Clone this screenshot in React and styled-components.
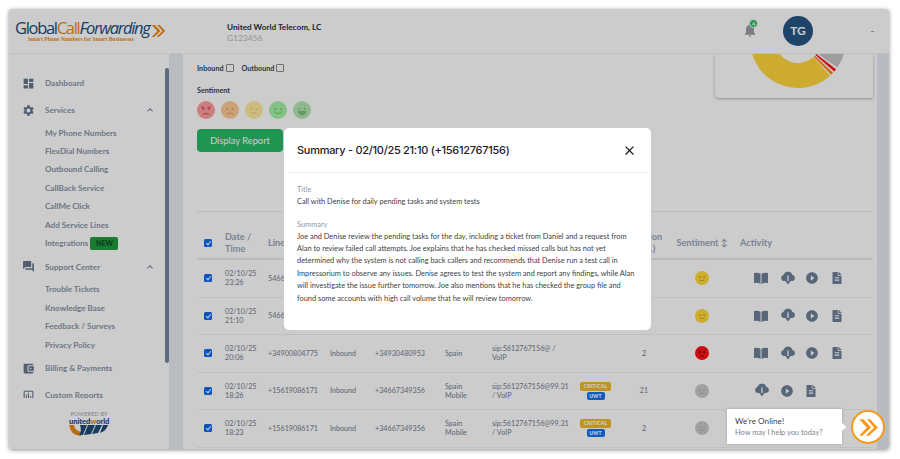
import React from "react";
import styled, { createGlobalStyle } from "styled-components";
import {
  MdDashboard, MdSettings, MdForum, MdAccountBalanceWallet, MdOutlineAssessment,
  MdExpandLess, MdNotifications, MdClose, MdPlayCircleFilled,
} from "react-icons/md";
import { FaFileAlt } from "react-icons/fa";

const Global = createGlobalStyle`
  html, body { margin: 0; padding: 0; background: #fff; }
  body { font-family: "Lato", "Liberation Sans", sans-serif; }
  * { box-sizing: border-box; }
`;

const Page = styled.div`
  width: 900px;
  height: 459px;
  padding: 9px 11px 10px 9px;
  overflow: hidden;
`;
const Frame = styled.div`
  position: relative;
  width: 880px;
  height: 440px;
  background: #fff;
  border-radius: 3px;
  box-shadow: 0 1px 4px rgba(0, 0, 0, 0.45);
  overflow: hidden;
  display: flex;
  flex-direction: column;
`;

/* Header */
const Header = styled.header`
  height: 45px;
  flex: none;
  display: flex;
  align-items: center;
  border-bottom: 1px solid #f0f0f0;
  background: #fff;
  z-index: 2;
`;
const Logo = styled.div`
  width: 218px;
  padding: 0 0 1px 6px;
  display: flex;
  align-items: center;
  gap: 1px;
`;
const LogoText = styled.div`
  display: flex;
  flex-direction: column;
`;
const LogoWords = styled.div`
  font-family: "Open Sans", sans-serif;
  font-size: 16.5px;
  line-height: 17px;
  letter-spacing: -1.3px;
  color: #1f4a78;
  white-space: nowrap;
`;
const LogoOrange = styled.span`
  color: #ea8a16;
`;
const LogoItalic = styled.span`
  font-style: italic;
`;
const Tagline = styled.div`
  font-family: "Liberation Serif", serif;
  font-weight: 700;
  font-size: 5.6px;
  line-height: 6px;
  color: #ea8a16;
  padding-left: 13px;
  white-space: nowrap;
`;
const Company = styled.div`
  flex: 1;
  margin-top: 4px;
`;
const CompanyName = styled.div`
  font-size: 8.2px;
  font-weight: 700;
  line-height: 11px;
  color: #2b3038;
`;
const CompanyId = styled.div`
  font-size: 8.4px;
  line-height: 11px;
  color: #b8bcc2;
`;
const Bell = styled.div`
  position: relative;
  width: 16px;
  height: 16px;
  margin-right: 25px;
  margin-top: -2px;
  color: #9a9da3;
  font-size: 16px;
  line-height: 16px;
`;
const BellBadge = styled.span`
  position: absolute;
  top: -3px;
  left: 7px;
  width: 9px;
  height: 9px;
  border-radius: 50%;
  background: #1fb85c;
  border: 1px solid #fff;
  color: #fff;
  font-size: 6px;
  font-weight: 700;
  line-height: 7px;
  text-align: center;
`;
const Avatar = styled.div`
  width: 30px;
  height: 30px;
  border-radius: 50%;
  background: #265585;
  color: #fff;
  font-size: 12px;
  font-weight: 700;
  display: flex;
  align-items: center;
  justify-content: center;
  margin-right: 58px;
  margin-top: -1px;
`;
const HeaderDash = styled.div`
  width: 3px;
  height: 1px;
  background: #aaa;
  margin-right: 15px;
`;

/* Body */
const Body = styled.div`
  flex: 1;
  min-height: 0;
  display: flex;
`;
const Sidebar = styled.aside`
  position: relative;
  width: 160px;
  flex: none;
  display: flex;
  flex-direction: column;
  background: #fff;
`;
const SideThumb = styled.div`
  position: absolute;
  right: 0;
  top: 14px;
  width: 4px;
  height: 295px;
  border-radius: 2px;
  background: #74869f;
`;
const Nav = styled.nav`
  height: 344px;
  flex: none;
  overflow: hidden;
  padding-top: 11px;
`;
const NavHead = styled.div`
  height: 18px;
  margin-top: 9px;
  display: flex;
  align-items: center;
  color: #8a94a6;
  font-size: 8.1px;
  font-weight: 700;
`;
const NavIcon = styled.span`
  width: 36px;
  padding-left: 13px;
  display: flex;
  align-items: center;
  font-size: 13px;
  color: #66758c;
`;
const NavLabel = styled.span`
  flex: 1;
`;
const NavChevron = styled.span`
  width: 18px;
  margin-right: 7px;
  display: flex;
  font-size: 12px;
  color: #7a8598;
`;
const SubList = styled.div`
  margin: 4.5px 0 -3.5px;
`;
const SubItem = styled.div`
  height: 18.4px;
  padding-left: 36px;
  display: flex;
  align-items: center;
  color: #8a94a6;
  font-size: 8.1px;
  font-weight: 700;
`;
const NewTag = styled.span`
  margin-left: 2px;
  width: 28px;
  text-align: center;
  height: 13px;
  border-radius: 2px;
  background: #1f9a3d;
  color: #0b4a1c;
  font-size: 7px;
  line-height: 13px;
  font-weight: 700;
`;
const Powered = styled.div`
  flex: 1;
  display: flex;
  flex-direction: column;
  align-items: center;
  padding: 12px 0 0 0;
  width: 160px;
`;
const PoweredText = styled.div`
  font-size: 5.6px;
  line-height: 8px;
  color: #9aa0a8;
  letter-spacing: 0.1px;
`;
const UwLogo = styled.div`
  position: relative;
  width: 42px;
  height: 20px;
`;
const UwWord = styled.div`
  position: absolute;
  top: -1px;
  left: 1px;
  font-size: 7.6px;
  font-weight: 900;
  line-height: 9px;
  letter-spacing: -0.1px;
  color: #1f4a78;
  white-space: nowrap;
`;
const UwO = styled.span`
  color: #ea8a16;
`;
const Track = styled.div`
  width: 14px;
  flex: none;
  background: #e6ebf2;
`;
const RightTrack = styled(Track)`
  width: 12px;
`;

/* Main */
const Main = styled.main`
  flex: 1;
  min-width: 0;
  overflow: hidden;
  padding: 0 4px 0 14px;
  background: #fff;
`;
const TopRow = styled.div`
  display: flex;
  justify-content: space-between;
  align-items: flex-start;
  height: 158px;
  border-bottom: 1px solid #ededed;
`;
const Filters = styled.div`
  padding-top: 8px;
`;
const DirectionRow = styled.div`
  display: flex;
  align-items: center;
  gap: 8px;
  height: 12px;
`;
const CheckLabel = styled.label`
  display: flex;
  align-items: center;
  gap: 2px;
  color: #3c4350;
  font-size: 7.2px;
  font-weight: 700;
`;
const Check = styled.input`
  margin: 0;
  appearance: none;
  position: relative;
  width: 8px;
  height: 8px;
  border: 1px solid #8b8b8b;
  border-radius: 1px;
  background: #fff;
  &:checked {
    background: #0e6bf0;
    border: 0;
    border-radius: 1.5px;
  }
  &:checked::after {
    content: "";
    position: absolute;
    left: 2.8px;
    top: 1px;
    width: 2px;
    height: 4px;
    border: solid #fff;
    border-width: 0 1.1px 1.1px 0;
    transform: rotate(40deg);
  }
`;
const SentimentLabel = styled.div`
  margin-top: 11px;
  color: #3c4350;
  font-size: 7.2px;
  font-weight: 700;
  line-height: 12px;
`;
const FaceRow = styled.div`
  display: flex;
  gap: 6px;
  margin-top: 4px;
`;
const Display = styled.button`
  display: block;
  margin-top: 10px;
  width: 86px;
  height: 23px;
  border: 0;
  border-radius: 4px;
  background: #29bb68;
  color: #fff;
  font-family: "Lato", sans-serif;
  font-size: 9.3px;
  padding: 0;
`;
const ChartCard = styled.div`
  width: 158px;
  height: 44px;
  background: #fff;
  border-radius: 0 0 0 4px;
  box-shadow: 0 1px 3px rgba(0, 0, 0, 0.3);
  line-height: 0;
`;

/* Table */
const cols = "28px 43px 62px 45px 70px 47px 88px 44px 40px 76px 133px";
const HeadRow = styled.div`
  display: grid;
  grid-template-columns: ${cols};
  height: 48px;
  padding-top: 16px;
  align-items: center;
  border-bottom: 2px solid #e8eaee;
  color: #99a5b8;
  font-size: 9.2px;
  font-weight: 700;
  line-height: 12px;
`;
const Row = styled.div`
  display: grid;
  grid-template-columns: ${cols};
  height: 37.5px;
  align-items: center;
  border-bottom: 1px solid #eef0f2;
  color: #747e8e;
  font-size: 7.2px;
  line-height: 9px;
`;
const CheckCell = styled.div`
  padding-left: 7px;
  display: flex;
`;
const Center = styled.div`
  display: flex;
  flex-direction: column;
  align-items: center;
  text-align: center;
`;
const TagStack = styled.div`
  width: 31px;
  display: flex;
  flex-direction: column;
  align-items: center;
  gap: 1px;
`;
const SortHead = styled.div`
  text-align: center;
  white-space: nowrap;
`;
const Tag = styled.span`
  display: block;
  border-radius: 2px;
  height: ${(p) => (p.$blue ? 8 : 9)}px;
  line-height: ${(p) => (p.$blue ? 8 : 9)}px;
  width: ${(p) => (p.$blue ? 18 : 31)}px;
  text-align: center;
  font-size: 5px;
  font-weight: 900;
  color: #fff;
  letter-spacing: 0.2px;
  background: ${(p) => (p.$blue ? "#0f74f5" : "#f0b92a")};
`;
const Activity = styled.div`
  padding-left: 14px;
  display: flex;
  align-items: center;
  color: #6f8099;
`;
const ActIcon = styled.span`
  width: 25.5px;
  display: flex;
  font-size: ${(p) => p.$size || 13}px;
`;

/* Modal */
const Overlay = styled.div`
  position: absolute;
  inset: 0;
  background: rgba(0, 0, 0, 0.2);
  z-index: 5;
  padding: 119px 0 0 275px;
`;
const Modal = styled.div`
  width: 367px;
  height: 202px;
  background: #fff;
  border-radius: 5px;
  color: #3b3f46;
`;
const ModalHead = styled.div`
  height: 45px;
  margin: 0 3px;
  padding: 0 10px;
  display: flex;
  justify-content: space-between;
  align-items: center;
  border-bottom: 1px solid #eef0f2;
`;
const ModalTitle = styled.h2`
  margin: 0;
  font-family: "Inter", sans-serif;
  font-size: 11px;
  font-weight: 500;
  letter-spacing: -0.28px;
  color: #1d2026;
`;
const CloseBtn = styled.span`
  display: flex;
  font-size: 15px;
  color: #222;
  margin-right: 1px;
`;
const ModalBody = styled.div`
  padding: 9.5px 13px 0;
`;
const FieldLabel = styled.div`
  color: #8b98ab;
  font-size: 7.4px;
  line-height: 13px;
`;
const FieldValue = styled.div`
  font-size: 7.4px;
  line-height: 12.4px;
  margin-bottom: 9.6px;
`;

/* Chat */
const Chat = styled.div`
  position: absolute;
  right: 47px;
  bottom: 5px;
  z-index: 6;
  width: 115px;
  height: 35px;
  background: #fff;
  box-shadow: 0 0 3px rgba(0, 0, 0, 0.2);
  padding: 6px 8px;
  &::after {
    content: "";
    position: absolute;
    right: -3px;
    top: 15px;
    width: 6px;
    height: 6px;
    background: #fff;
    transform: rotate(45deg);
  }
`;
const ChatTitle = styled.div`
  font-size: 8.2px;
  line-height: 12px;
  color: #3a3f47;
`;
const ChatSub = styled.div`
  font-size: 7.4px;
  line-height: 11px;
  color: #7d838c;
`;
const ChatBtn = styled.div`
  position: absolute;
  right: 4px;
  bottom: 5px;
  z-index: 6;
  width: 34px;
  height: 34px;
  border-radius: 50%;
  background: #fff;
  border: 2px solid #f39a1f;
  display: flex;
  align-items: center;
  justify-content: center;
`;

function Face({ color, ink, mood, size = 18 }) {
  const mouths = {
    angry: "M6.5 13.2 Q9 11.4 11.5 13.2",
    sad: "M6 13.2 Q9 10.8 12 13.2",
    neutral: "M6.5 12 L11.5 12",
    smile: "M5.6 10.8 Q9 14.6 12.4 10.8",
  };
  return (
    <svg width={size} height={size} viewBox="0 0 18 18">
      <circle cx="9" cy="9" r="9" fill={color} />
      {mood === "angry" && <path d="M4.2 5.6 L7.6 7.4 M13.8 5.6 L10.4 7.4" stroke={ink} strokeWidth="1.2" />}
      {mood === "grin" ? (
        <path d="M4.8 10 H13.2 Q12.6 14.4 9 14.4 Q5.4 14.4 4.8 10 Z" fill={ink} />
      ) : (
        <path d={mouths[mood]} stroke={ink} strokeWidth="1.2" fill="none" strokeLinecap="round" />
      )}
      <circle cx="6.2" cy="8" r="1.1" fill={ink} />
      <circle cx="11.8" cy="8" r="1.1" fill={ink} />
    </svg>
  );
}

function wedge(cx, cy, r0, r1, a0, a1) {
  const p = (r, a) => [cx + r * Math.cos((a * Math.PI) / 180), cy + r * Math.sin((a * Math.PI) / 180)].map((v) => v.toFixed(2)).join(" ");
  const large = a1 - a0 > 180 ? 1 : 0;
  return `M${p(r1, a0)} A${r1} ${r1} 0 ${large} 1 ${p(r1, a1)} L${p(r0, a1)} A${r0} ${r0} 0 ${large} 0 ${p(r0, a0)} Z`;
}

const Donut = () => (
  <svg width="158" height="44" viewBox="0 0 158 44">
    <path d={wedge(83, -14, 23, 48, -25, 35)} fill="#c6c5c6" />
    <path d={wedge(83, -14, 23, 48, 37.5, 41)} fill="#ff0f14" />
    <path d={wedge(83, -14, 23, 48, 43, 46.5)} fill="#ff8a10" />
    <path d={wedge(83, -14, 23, 48, 48, 200)} fill="#ffd63c" />
  </svg>
);

const Chevrons = ({ width = 15, height = 14, color = "#ea8a16" }) => (
  <svg width={width} height={height} viewBox="0 0 19 17" fill={color}>
    <path d="M1 1 H5 L12 8.5 L4 16 H1 L8 8.5 Z" />
    <path d="M8 1 H11 L18 8.5 L10 16 H7 L14.5 8.5 Z" />
  </svg>
);

const BookIcon = () => (
  <svg width="14" height="12" viewBox="0 0 14 12" fill="currentColor">
    <path d="M0 1 Q4 0 6.5 1.8 V12 Q4 10.2 0 11 Z M14 1 Q10 0 7.5 1.8 V12 Q10 10.2 14 11 Z" />
  </svg>
);

const CloudIcon = () => (
  <svg width="16" height="15" viewBox="0 0 16 15" fill="currentColor">
    <path d="M3.8 10 A3 3 0 0 1 3.4 4.1 A4.6 4.6 0 0 1 12.2 3.7 A3.2 3.2 0 0 1 12.4 10 Z" />
    <path d="M5.4 10 H10.6 L8 13.6 Z" />
    <path d="M8 4.5 V10" stroke="#fff" strokeWidth="1.3" />
  </svg>
);

const UwShield = () => (
  <svg width="42" height="20" viewBox="0 0 42 20" style={{ position: "absolute", left: 0, top: 0 }}>
    <path d="M1 7 H6 Q7 13 14 14 L13 18 Q3 18 1 7 Z" fill="#ea8a16" />
    <path d="M12 7 H19 L15 17 H11 Q14 13 12 7 Z M20 7 H27 L23 16 L16 17 Z M28 7 H34 L30 15 L24 16 Z M35 7 H40 Q39 12 32 15 Z" fill="#1f4a78" />
  </svg>
);

const menu = [
  { icon: <MdDashboard />, label: "Dashboard" },
  { icon: <MdSettings />, label: "Services", subs: ["My Phone Numbers", "FlexDial Numbers", "Outbound Calling", "CallBack Service", "CallMe Click", "Add Service Lines", "Integrations"] },
  { icon: <MdForum />, label: "Support Center", subs: ["Trouble Tickets", "Knowledge Base", "Feedback / Surveys", "Privacy Policy"] },
  { icon: <MdAccountBalanceWallet />, label: "Billing & Payments" },
  { icon: <MdOutlineAssessment />, label: "Custom Reports" },
];

const rows = [
  { date: "02/10/25", time: "23:26", line: "546673493", dir: "Inbound", to: "+34930480953", country: ["Spain"], sip: ["sip:5612767156@ /", "VoIP"], dur: "2", mood: "neutral", color: "#ffd93a", ink: "#c9a420", book: true },
  { date: "02/10/25", time: "21:10", line: "546673493", dir: "Inbound", to: "+34930480953", country: ["Spain"], sip: ["sip:5612767156@ /", "VoIP"], dur: "2", mood: "neutral", color: "#ffd93a", ink: "#c9a420", book: true },
  { date: "02/10/25", time: "20:06", line: "+34900804775", dir: "Inbound", to: "+34930480953", country: ["Spain"], sip: ["sip:5612767156@ /", "VoIP"], dur: "2", mood: "angry", color: "#ff1218", ink: "#8a0508", book: true },
  { date: "02/10/25", time: "18:26", line: "+15619086171", dir: "Inbound", to: "+34667349356", country: ["Spain", "Mobile"], sip: ["sip:5612767156@99.31", "/ VoIP"], tags: true, dur: "21", mood: "neutral", color: "#c8c8c8", ink: "#aeaeae" },
  { date: "02/10/25", time: "18:23", line: "+15619086171", dir: "Inbound", to: "+34667349356", country: ["Spain", "Mobile"], sip: ["sip:5612767156@99.31", "/ VoIP"], tags: true, dur: "2", mood: "neutral", color: "#c8c8c8", ink: "#aeaeae", hidden: true },
];

const Lines = ({ items }) => (
  <div>
    {items.map((t, i) => (
      <div key={i}>{t}</div>
    ))}
  </div>
);

export default function App() {
  return (
    <Page>
      <Global />
      <Frame>
        <Header>
          <Logo>
            <LogoText>
              <LogoWords>
                Global<LogoOrange>Call</LogoOrange>
                <LogoItalic>Forwarding</LogoItalic>
              </LogoWords>
              <Tagline>Smart Phone Numbers for Smart Businesses</Tagline>
            </LogoText>
            <Chevrons />
          </Logo>
          <Company>
            <CompanyName>United World Telecom, LC</CompanyName>
            <CompanyId>G123456</CompanyId>
          </Company>
          <Bell>
            <MdNotifications />
            <BellBadge>4</BellBadge>
          </Bell>
          <Avatar>TG</Avatar>
          <HeaderDash />
        </Header>
        <Body>
          <Sidebar>
            <Nav>
              {menu.map((m) => (
                <React.Fragment key={m.label}>
                  <NavHead>
                    <NavIcon>{m.icon}</NavIcon>
                    <NavLabel>{m.label}</NavLabel>
                    {m.subs && (
                      <NavChevron>
                        <MdExpandLess />
                      </NavChevron>
                    )}
                  </NavHead>
                  {m.subs && (
                    <SubList>
                      {m.subs.map((s) => (
                        <SubItem key={s}>
                          {s}
                          {s === "Integrations" && <NewTag>NEW</NewTag>}
                        </SubItem>
                      ))}
                    </SubList>
                  )}
                </React.Fragment>
              ))}
            </Nav>
            <Powered>
              <PoweredText>POWERED BY</PoweredText>
              <UwLogo>
                <UwShield />
                <UwWord>
                  united<UwO>w</UwO>orld
                </UwWord>
              </UwLogo>
            </Powered>
            <SideThumb />
          </Sidebar>
          <Track />
          <Main>
            <TopRow>
              <Filters>
                <DirectionRow>
                  <CheckLabel>
                    Inbound <Check type="checkbox" readOnly />
                  </CheckLabel>
                  <CheckLabel>
                    Outbound <Check type="checkbox" readOnly />
                  </CheckLabel>
                </DirectionRow>
                <SentimentLabel>Sentiment</SentimentLabel>
                <FaceRow>
                  <Face mood="angry" color="#ff9da0" ink="#d65c62" />
                  <Face mood="sad" color="#ffcc96" ink="#e0a060" />
                  <Face mood="neutral" color="#ffeba0" ink="#e8cf80" />
                  <Face mood="smile" color="#a5f2a5" ink="#70d070" />
                  <Face mood="grin" color="#b2e8b2" ink="#80c080" />
                </FaceRow>
                <Display>Display Report</Display>
              </Filters>
              <ChartCard>
                <Donut />
              </ChartCard>
            </TopRow>
            <HeadRow>
              <CheckCell>
                <Check type="checkbox" checked readOnly />
              </CheckCell>
              <div>Date /<br />Time</div>
              <div>Line</div>
              <div>Direction</div>
              <div>To</div>
              <div>Country</div>
              <div>SIP</div>
              <div>Tags</div>
              <Center>Duration<br />(min.)</Center>
              <SortHead>Sentiment ↕</SortHead>
              <div>Activity</div>
            </HeadRow>
            {rows.map((r, i) => (
              <Row key={i}>
                <CheckCell>
                  <Check type="checkbox" checked readOnly />
                </CheckCell>
                <Lines items={[r.date, r.time]} />
                <div>{r.line}</div>
                <div>{r.dir}</div>
                <div>{r.to}</div>
                <Lines items={r.country} />
                <Lines items={r.sip} />
                <TagStack>
                  {r.tags && (
                    <>
                      <Tag>CRITICAL</Tag>
                      <Tag $blue>UWT</Tag>
                    </>
                  )}
                </TagStack>
                <Center>{r.dur}</Center>
                <Center>
                  <Face mood={r.mood} color={r.color} ink={r.ink} size={14} />
                </Center>
                {r.hidden ? (
                  <div />
                ) : (
                  <Activity>
                    {r.book && (
                      <ActIcon><BookIcon /></ActIcon>
                    )}
                    <ActIcon><CloudIcon /></ActIcon>
                    <ActIcon $size={14}><MdPlayCircleFilled /></ActIcon>
                    <ActIcon $size={12}><FaFileAlt /></ActIcon>
                  </Activity>
                )}
              </Row>
            ))}
          </Main>
          <RightTrack />
        </Body>
        <Overlay>
          <Modal>
            <ModalHead>
              <ModalTitle>Summary - 02/10/25 21:10 (+15612767156)</ModalTitle>
              <CloseBtn><MdClose /></CloseBtn>
            </ModalHead>
            <ModalBody>
              <FieldLabel>Title</FieldLabel>
              <FieldValue>Call with Denise for daily pending tasks and system tests</FieldValue>
              <FieldLabel>Summary</FieldLabel>
              <FieldValue>
                Joe and Denise review the pending tasks for the day, including a ticket from Daniel and a request from Alan to review failed call attempts. Joe explains that he has checked missed calls but has not yet determined why the system is not calling back callers and recommends that Denise run a test call in Impressorium to observe any issues. Denise agrees to test the system and report any findings, while Alan will investigate the issue further tomorrow. Joe also mentions that he has checked the group file and found some accounts with high call volume that he will review tomorrow.
              </FieldValue>
            </ModalBody>
          </Modal>
        </Overlay>
        <Chat>
          <ChatTitle>We're Online!</ChatTitle>
          <ChatSub>How may I help you today?</ChatSub>
        </Chat>
        <ChatBtn>
          <Chevrons width={21} height={19} color="#f39a1f" />
        </ChatBtn>
      </Frame>
    </Page>
  );
}
